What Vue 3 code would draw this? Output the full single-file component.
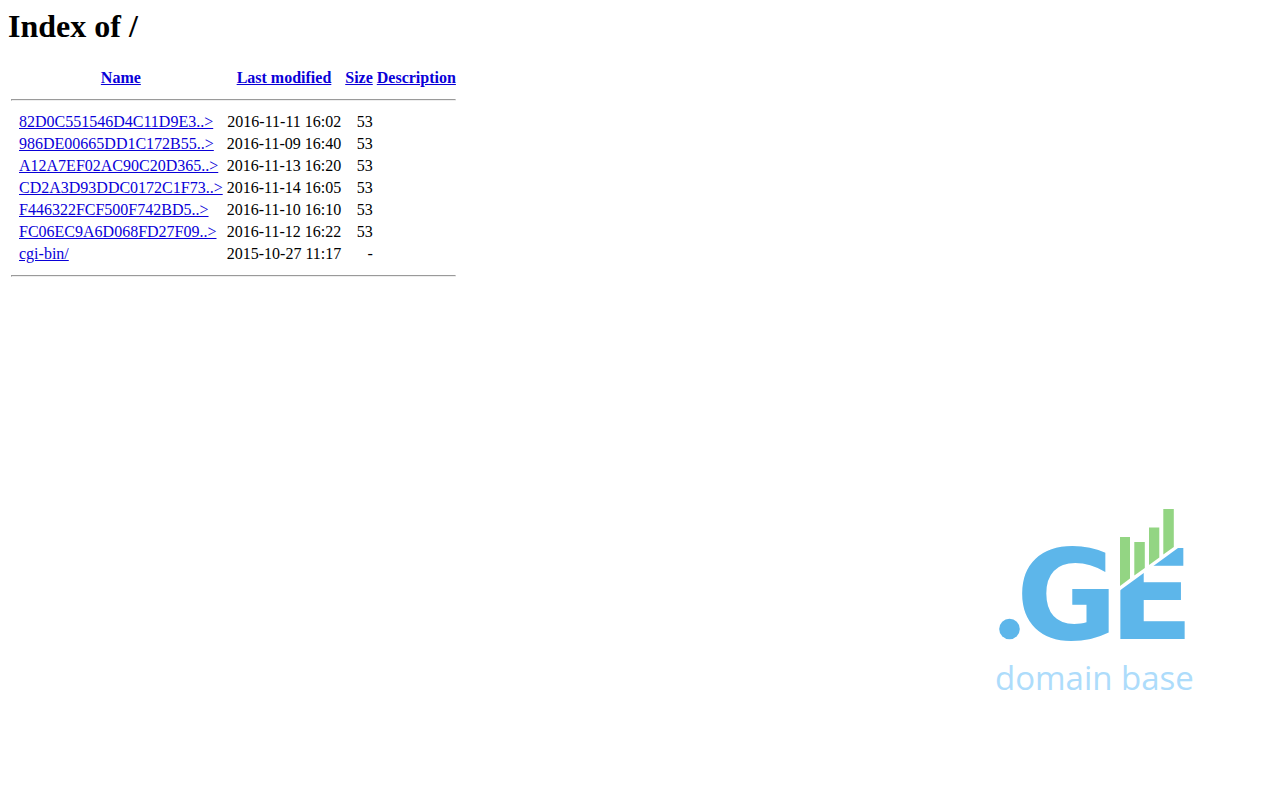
<script setup>
const columns = [
  { label: 'Name', href: '?C=N;O=D' },
  { label: 'Last modified', href: '?C=M;O=A' },
  { label: 'Size', href: '?C=S;O=A' },
  { label: 'Description', href: '?C=D;O=A' },
]

const files = [
  { name: '82D0C551546D4C11D9E3..>', modified: '2016-11-11 16:02', size: '53' },
  { name: '986DE00665DD1C172B55..>', modified: '2016-11-09 16:40', size: '53' },
  { name: 'A12A7EF02AC90C20D365..>', modified: '2016-11-13 16:20', size: '53' },
  { name: 'CD2A3D93DDC0172C1F73..>', modified: '2016-11-14 16:05', size: '53' },
  { name: 'F446322FCF500F742BD5..>', modified: '2016-11-10 16:10', size: '53' },
  { name: 'FC06EC9A6D068FD27F09..>', modified: '2016-11-12 16:22', size: '53' },
  { name: 'cgi-bin/', modified: '2015-10-27 11:17', size: '-' },
]
</script>

<template>
  <main class="page">
    <h1 class="title">Index of /</h1>
    <table class="listing">
      <thead>
        <tr>
          <th>&nbsp;</th>
          <th v-for="c in columns" :key="c.label" scope="col">
            <a :href="c.href">{{ c.label }}</a>
          </th>
        </tr>
        <tr>
          <th colspan="5"><hr /></th>
        </tr>
      </thead>
      <tbody>
        <tr v-for="f in files" :key="f.name">
          <td>&nbsp;</td>
          <td><a href="#">{{ f.name }}</a></td>
          <td class="right">{{ f.modified }}</td>
          <td class="right">{{ f.size }}</td>
          <td>&nbsp;</td>
        </tr>
      </tbody>
      <tfoot>
        <tr>
          <th colspan="5"><hr /></th>
        </tr>
      </tfoot>
    </table>

    <svg class="logo" viewBox="990 505 210 200" role="img" aria-label=".GE domain base">
      <defs>
        <clipPath id="below-cut">
          <path d="M1115 594L1178 548H1195V650H1115z" />
        </clipPath>
      </defs>
      <g class="mark">
        <circle cx="1009.5" cy="629" r="10.3" />
        <text class="letter" x="1016" y="639">G</text>
        <text class="letter" x="1109" y="639" clip-path="url(#below-cut)">E</text>
      </g>
      <g class="bars">
        <path d="M1120 537h10v41.5l-10 7.5z" />
        <path d="M1134.300 542h10.500v26l-10.500 7.500z" />
        <path d="M1149 527.500h10.300v30l-10.300 7.500z" />
        <path d="M1163.300 509h10.500v38l-10.500 7.500z" />
      </g>
      <text class="tagline" x="995" y="690">domain base</text>
    </svg>
  </main>
</template>

<style>
body {
  margin: 0;
  background: #fff;
}
</style>

<style scoped>
.page {
  box-sizing: border-box;
  min-height: 100vh;
  padding: 8px;
  display: flex;
  flex-direction: column;
  align-items: flex-start;
  color: #000;
  font-family: "Liberation Serif", "Times New Roman", serif;
  font-size: 16px;
}

.title {
  margin: 0 0 21px;
  font-size: 32px;
}

.listing {
  border-spacing: 2px;
}

.listing th,
.listing td {
  padding: 1px;
  white-space: nowrap;
}

.right {
  text-align: right;
}

a {
  color: #0a00d8;
}

hr {
  margin: 8px 0;
}

.logo {
  width: 210px;
  height: 200px;
  margin: auto 72px 87px auto;
}

.mark {
  fill: #5db6ea;
}

.letter {
  font-family: "DejaVu Sans", sans-serif;
  font-weight: 700;
  font-size: 124px;
}

.bars {
  fill: #93d583;
}

.tagline {
  fill: #addcfb;
  font-family: "Open Sans", "Noto Sans", sans-serif;
  font-size: 33px;
}
</style>
